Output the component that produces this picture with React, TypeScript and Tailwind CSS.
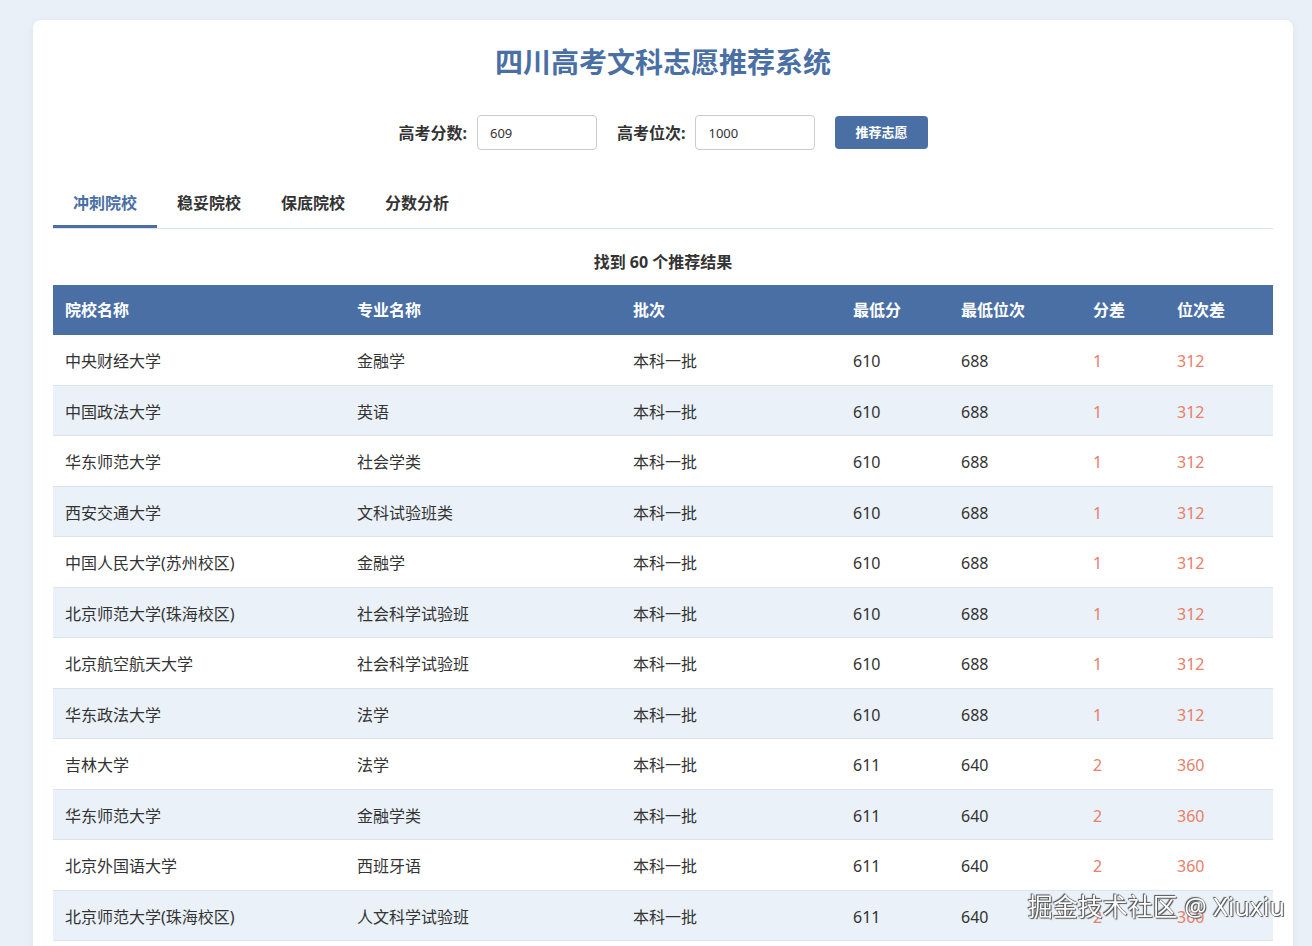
import React from 'react';

type Row = {
  school: string;
  major: string;
  batch: string;
  minScore: number;
  minRank: number;
  scoreDiff: number;
  rankDiff: number;
};

const rows: Row[] = [
  { school: '中央财经大学', major: '金融学', batch: '本科一批', minScore: 610, minRank: 688, scoreDiff: 1, rankDiff: 312 },
  { school: '中国政法大学', major: '英语', batch: '本科一批', minScore: 610, minRank: 688, scoreDiff: 1, rankDiff: 312 },
  { school: '华东师范大学', major: '社会学类', batch: '本科一批', minScore: 610, minRank: 688, scoreDiff: 1, rankDiff: 312 },
  { school: '西安交通大学', major: '文科试验班类', batch: '本科一批', minScore: 610, minRank: 688, scoreDiff: 1, rankDiff: 312 },
  { school: '中国人民大学(苏州校区)', major: '金融学', batch: '本科一批', minScore: 610, minRank: 688, scoreDiff: 1, rankDiff: 312 },
  { school: '北京师范大学(珠海校区)', major: '社会科学试验班', batch: '本科一批', minScore: 610, minRank: 688, scoreDiff: 1, rankDiff: 312 },
  { school: '北京航空航天大学', major: '社会科学试验班', batch: '本科一批', minScore: 610, minRank: 688, scoreDiff: 1, rankDiff: 312 },
  { school: '华东政法大学', major: '法学', batch: '本科一批', minScore: 610, minRank: 688, scoreDiff: 1, rankDiff: 312 },
  { school: '吉林大学', major: '法学', batch: '本科一批', minScore: 611, minRank: 640, scoreDiff: 2, rankDiff: 360 },
  { school: '华东师范大学', major: '金融学类', batch: '本科一批', minScore: 611, minRank: 640, scoreDiff: 2, rankDiff: 360 },
  { school: '北京外国语大学', major: '西班牙语', batch: '本科一批', minScore: 611, minRank: 640, scoreDiff: 2, rankDiff: 360 },
  { school: '北京师范大学(珠海校区)', major: '人文科学试验班', batch: '本科一批', minScore: 611, minRank: 640, scoreDiff: 2, rankDiff: 360 },
  { school: '南开大学', major: '经济学类', batch: '本科一批', minScore: 611, minRank: 640, scoreDiff: 2, rankDiff: 360 },
  { school: '厦门大学', major: '法学', batch: '本科一批', minScore: 612, minRank: 598, scoreDiff: 3, rankDiff: 402 },
];

const tabs = ['冲刺院校', '稳妥院校', '保底院校', '分数分析'];

const headers = [
  { label: '院校名称', w: 'w-[292px]' },
  { label: '专业名称', w: 'w-[276px]' },
  { label: '批次', w: 'w-[220px]' },
  { label: '最低分', w: 'w-[108px]' },
  { label: '最低位次', w: 'w-[132px]' },
  { label: '分差', w: 'w-[84px]' },
  { label: '位次差', w: 'w-[108px]' },
];

export default function App() {
  return (
    <div
      className="min-h-screen bg-[#e9f0f7] pl-[33px] pr-[19px] pt-5 text-[#333]"
      style={{ fontFamily: '"Noto Sans", "Noto Sans CJK SC", sans-serif' }}
    >
      <div className="w-[1260px] rounded-lg bg-white p-5 shadow-[0_2px_10px_rgba(0,0,0,0.06)]">
        {/* Title */}
        <h1 className="text-center text-[28px] font-bold leading-[45px] text-[#4a6fa5]">
          四川高考文科志愿推荐系统
        </h1>

        {/* Inputs */}
        <div className="mt-[30px] flex items-center justify-center">
          <label className="text-base font-bold text-[#333]">高考分数:</label>
          <input
            defaultValue="609"
            className="ml-[10px] h-[35px] w-[120px] rounded border border-[#ccc] px-3 text-[13px] text-[#333] outline-none"
          />
          <label className="ml-5 text-base font-bold text-[#333]">高考位次:</label>
          <input
            defaultValue="1000"
            className="ml-[10px] h-[35px] w-[120px] rounded border border-[#ccc] px-3 text-[13px] text-[#333] outline-none"
          />
          <button className="ml-5 h-[33px] rounded bg-[#4a6fa5] px-5 text-[13px] font-bold text-white">
            推荐志愿
          </button>
        </div>

        {/* Tabs */}
        <div className="mt-[30px] flex border-b border-[#dde2e8]">
          {tabs.map((t, i) => (
            <div
              key={t}
              className={`px-5 pb-[10px] pt-[11px] text-base font-bold leading-6 border-b-[3px] ${
                i === 0 ? 'border-[#4a6fa5] text-[#4a6fa5]' : 'border-transparent text-[#333]'
              }`}
            >
              {t}
            </div>
          ))}
        </div>

        {/* Result count */}
        <div className="mb-[11px] mt-[21px] text-center text-base font-bold leading-6 text-[#333]">
          找到 60 个推荐结果
        </div>

        {/* Table */}
        <table className="w-[1220px] table-fixed border-collapse">
          <thead>
            <tr className="bg-[#4a6fa5] text-white">
              {headers.map((h) => (
                <th key={h.label} className={`${h.w} px-3 py-[13px] text-left text-base font-bold leading-6`}>
                  {h.label}
                </th>
              ))}
            </tr>
          </thead>
          <tbody>
            {rows.map((r, i) => (
              <tr key={i} className={`border-b border-[#dde3ea] ${i % 2 === 1 ? 'bg-[#eaf1f8]' : 'bg-white'}`}>
                <td className="px-3 pb-[11px] pt-[15px] text-base leading-[23.5px]">{r.school}</td>
                <td className="px-3 pb-[11px] pt-[15px] text-base leading-[23.5px]">{r.major}</td>
                <td className="px-3 pb-[11px] pt-[15px] text-base leading-[23.5px]">{r.batch}</td>
                <td className="px-3 pb-[11px] pt-[15px] text-base leading-[23.5px]">{r.minScore}</td>
                <td className="px-3 pb-[11px] pt-[15px] text-base leading-[23.5px]">{r.minRank}</td>
                <td className="px-3 pb-[11px] pt-[15px] text-base leading-[23.5px] text-[#e8806a]">{r.scoreDiff}</td>
                <td className="px-3 pb-[11px] pt-[15px] text-base leading-[23.5px] text-[#e8806a]">{r.rankDiff}</td>
              </tr>
            ))}
          </tbody>
        </table>
      </div>

      {/* Watermark */}
      <div
        className="fixed bottom-[27px] right-[27px] text-[25px] leading-none text-white"
        style={{ textShadow: '0 0 1px #333, 1px 1px 1px #555, -1px -1px 1px #555' }}
      >
        掘金技术社区 @ Xiuxiu
      </div>
    </div>
  );
}
